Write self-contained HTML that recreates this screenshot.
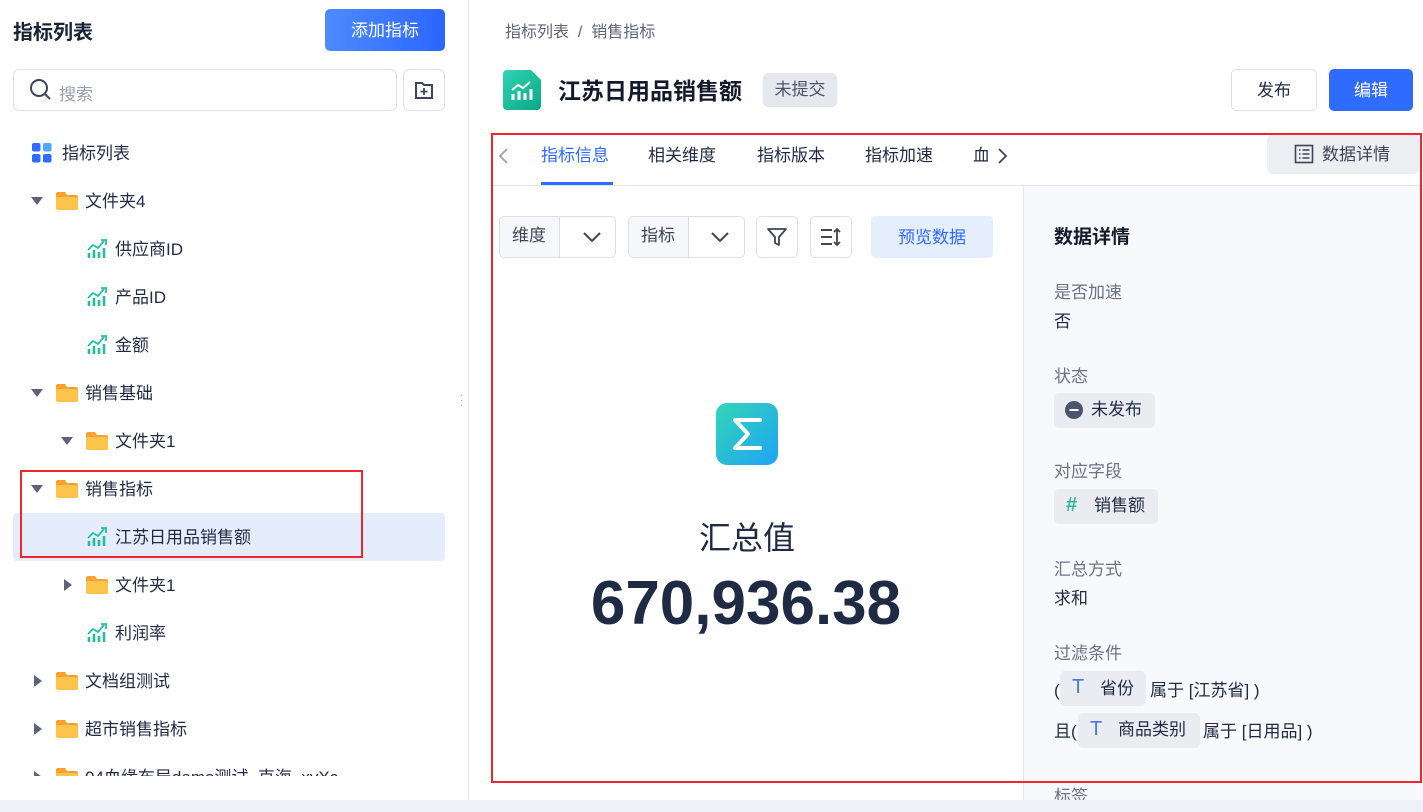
<!DOCTYPE html>
<html><head><meta charset="utf-8"><style>
*{margin:0;padding:0;box-sizing:border-box}
body{width:1423px;height:812px;position:relative;overflow:hidden;background:#fff;font-family:"Liberation Sans","Noto Sans CJK SC",sans-serif;color:#1f2a44}
.a{position:absolute}
.t{font-size:17px;line-height:20px;color:#1f2a44;white-space:nowrap}
.g{color:#6b7385;font-size:17px;white-space:nowrap}
.btn{border:1px solid #dcdfe6;border-radius:5px;background:#fff}
.tri{width:0;height:0;border-left:6px solid transparent;border-right:6px solid transparent;border-top:8px solid #5c6478}
.trr{width:0;height:0;border-top:6px solid transparent;border-bottom:6px solid transparent;border-left:8px solid #5c6478}
.chip{background:#eaecf1;border-radius:5px}
</style></head><body>
<div class="a" style="left:468px;top:0;width:1px;height:800px;background:#e4e7ed"></div>
<div class="a" style="left:13px;top:16px;font-size:20px;font-weight:bold;color:#1a2236">指标列表</div>
<div class="a" style="left:325px;top:9px;width:120px;height:42px;border-radius:5px;background:linear-gradient(90deg,#4d8bff,#2a66ff);color:#fff;font-size:17px;line-height:44px;text-align:center">添加指标</div>
<div class="a btn" style="left:13px;top:69px;width:384px;height:42px;border-radius:6px"></div>
<svg class="a" style="left:29px;top:78px" width="24" height="24" viewBox="0 0 24 24"><circle cx="10" cy="10" r="8" fill="none" stroke="#3d4557" stroke-width="2"/><path d="M16 16l5 5" stroke="#3d4557" stroke-width="2"/></svg>
<div class="a g" style="left:59px;top:80px;color:#9aa0ad">搜索</div>
<div class="a btn" style="left:403px;top:69px;width:42px;height:42px;border-radius:6px"></div>
<svg class="a" style="left:414px;top:80px" width="20" height="20" viewBox="0 0 20 20"><path d="M2 3h6l2 2h8v13H2z" fill="none" stroke="#3d4557" stroke-width="2"/><path d="M10 8v7M6.5 11.5h7" stroke="#3d4557" stroke-width="1.8"/></svg>
<svg class="a" style="left:32px;top:143px" width="20" height="20" viewBox="0 0 20 20"><rect x="0" y="0" width="8.5" height="8.5" rx="2" fill="#2f6bff"/><rect x="11" y="0" width="8.5" height="8.5" rx="2" fill="#4aa8ff"/><rect x="0" y="11" width="8.5" height="8.5" rx="2" fill="#2f6bff"/><rect x="11" y="11" width="8.5" height="8.5" rx="2" fill="#2f6bff"/></svg>
<div class="a t" style="left:62px;top:144px">指标列表</div>
<div class="a" style="left:13px;top:513px;width:432px;height:48px;background:#e5edfc;border-radius:4px"></div>
<div id="tree"></div>

<div class="a" style="left:505px;top:18px;font-size:16px;color:#5c6478">指标列表 &nbsp;/&nbsp; 销售指标</div>
<svg class="a" style="left:503px;top:70px" width="38" height="40" viewBox="0 0 38 40"><defs><linearGradient id="gr" x1="0" y1="0" x2="1" y2="1"><stop offset="0" stop-color="#2fd4b0"/><stop offset="1" stop-color="#0aa88a"/></linearGradient></defs><path d="M4 0h24l10 10v26a4 4 0 0 1-4 4H4a4 4 0 0 1-4-4V4a4 4 0 0 1 4-4z" fill="url(#gr)"/><path d="M10 30v-6M16 30v-9M22 30v-7M28 30v-11" stroke="#fff" stroke-width="3"/><path d="M9 20l6-5 5 3 7-6" fill="none" stroke="#fff" stroke-width="2"/></svg>
<div class="a" style="left:558px;top:72px;font-size:23px;font-weight:bold;color:#121a2c">江苏日用品销售额</div>
<div class="a chip" style="left:763px;top:73px;width:74px;height:34px;font-size:17px;line-height:34px;text-align:center;color:#4b5366;background:#e6e8ef">未提交</div>
<div class="a btn" style="left:1231px;top:69px;width:86px;height:42px;font-size:17px;line-height:42px;text-align:center;color:#1f2a44">发布</div>
<div class="a" style="left:1329px;top:69px;width:84px;height:42px;border-radius:5px;background:#2f6bff;color:#fff;font-size:17px;line-height:44px;text-align:center">编辑</div>

<div class="a" style="left:491px;top:185px;width:932px;height:1px;background:#e4e7ed"></div>
<svg class="a" style="left:497px;top:147px" width="12" height="18" viewBox="0 0 12 18"><path d="M10 2L3 9l7 7" fill="none" stroke="#9aa0ad" stroke-width="1.8"/></svg>
<div class="a t" style="left:541px;top:146px;color:#2f6bff">指标信息</div>
<div class="a" style="left:541px;top:182px;width:72px;height:3px;background:#2f6bff"></div>
<div class="a t" style="left:648px;top:146px">相关维度</div>
<div class="a t" style="left:757px;top:146px">指标版本</div>
<div class="a t" style="left:865px;top:146px">指标加速</div>
<div class="a t" style="left:973px;top:146px;width:15px;overflow:hidden">血</div>
<svg class="a" style="left:997px;top:147px" width="12" height="18" viewBox="0 0 12 18"><path d="M2 2l7 7-7 7" fill="none" stroke="#3d4557" stroke-width="1.8"/></svg>
<div class="a" style="left:1267px;top:134px;width:152px;height:40px;background:#eceef2;border-radius:6px"></div>
<svg class="a" style="left:1294px;top:144px" width="20" height="20" viewBox="0 0 20 20"><rect x="1.5" y="1.5" width="17" height="17" fill="none" stroke="#3d4557" stroke-width="1.6"/><path d="M5 6h1.5M5 10h1.5M5 14h1.5M8.5 6h7M8.5 10h7M8.5 14h7" stroke="#3d4557" stroke-width="1.6"/></svg>
<div class="a t" style="left:1322px;top:145px;color:#3d4557">数据详情</div>

<div class="a btn" style="left:499px;top:216px;width:117px;height:42px"></div>
<div class="a" style="left:500px;top:217px;width:60px;height:40px;background:#f5f7fb;border-right:1px solid #dcdfe6;border-radius:5px 0 0 5px"></div>
<div class="a t" style="left:512px;top:226px;color:#3d4557">维度</div>
<svg class="a" style="left:582px;top:230px" width="20" height="14" viewBox="0 0 20 14"><path d="M2 3l8 8 8-8" fill="none" stroke="#3d4557" stroke-width="2"/></svg>
<div class="a btn" style="left:628px;top:216px;width:117px;height:42px"></div>
<div class="a" style="left:629px;top:217px;width:60px;height:40px;background:#f5f7fb;border-right:1px solid #dcdfe6;border-radius:5px 0 0 5px"></div>
<div class="a t" style="left:641px;top:226px;color:#3d4557">指标</div>
<svg class="a" style="left:710px;top:230px" width="20" height="14" viewBox="0 0 20 14"><path d="M2 3l8 8 8-8" fill="none" stroke="#3d4557" stroke-width="2"/></svg>
<div class="a btn" style="left:756px;top:216px;width:42px;height:42px"></div>
<svg class="a" style="left:766px;top:226px" width="22" height="22" viewBox="0 0 22 22"><path d="M2 3h18l-7 8v8l-4-2v-6z" fill="none" stroke="#3d4557" stroke-width="1.8" stroke-linejoin="round"/></svg>
<div class="a btn" style="left:810px;top:216px;width:42px;height:42px"></div>
<svg class="a" style="left:820px;top:226px" width="22" height="22" viewBox="0 0 22 22"><path d="M1 4h11M1 11h11M1 18h11" stroke="#3d4557" stroke-width="2"/><path d="M17 3v16M14 6l3-3 3 3M14 16l3 3 3-3" fill="none" stroke="#3d4557" stroke-width="1.8"/></svg>
<div class="a" style="left:871px;top:216px;width:122px;height:42px;background:#e5eefd;border-radius:5px;color:#2f6bff;font-size:17px;line-height:44px;text-align:center">预览数据</div>

<svg class="a" style="left:716px;top:403px" width="62" height="62" viewBox="0 0 62 62"><defs><linearGradient id="sg" x1="0" y1="0" x2="1" y2="1"><stop offset="0" stop-color="#33d6b6"/><stop offset="1" stop-color="#1fa3f5"/></linearGradient></defs><rect width="62" height="62" rx="11" fill="url(#sg)"/><path d="M44 17H19l13 14-13 14h25" fill="none" stroke="#fff" stroke-width="4" stroke-linejoin="round" stroke-linecap="round"/></svg>
<div class="a" style="left:647px;top:513px;width:200px;text-align:center;font-size:32px;color:#1f2a44">汇总值</div>
<div class="a" style="left:546px;top:568px;width:400px;text-align:center;font-size:62px;font-weight:bold;color:#1f2a44">670,936.38</div>

<div class="a" style="left:1023px;top:186px;width:400px;height:614px;background:#f8f9fc;border-left:1px solid #e4e7ed"></div>
<div class="a" style="left:1054px;top:222px;font-size:19px;font-weight:bold;color:#121a2c">数据详情</div>
<div class="a g" style="left:1054px;top:278px">是否加速</div>
<div class="a t" style="left:1054px;top:312px">否</div>
<div class="a g" style="left:1054px;top:362px">状态</div>
<div class="a chip" style="left:1054px;top:393px;width:101px;height:35px"></div>
<svg class="a" style="left:1065px;top:401px" width="18" height="18" viewBox="0 0 18 18"><circle cx="9" cy="9" r="9" fill="#4b5570"/><path d="M4.5 9h9" stroke="#fff" stroke-width="2"/></svg>
<div class="a t" style="left:1091px;top:400px">未发布</div>
<div class="a g" style="left:1054px;top:457px">对应字段</div>
<div class="a chip" style="left:1054px;top:489px;width:104px;height:35px"></div>
<div class="a" style="left:1066px;top:494px;font-size:20px;color:#2fb89a;font-weight:bold">#</div>
<div class="a t" style="left:1094px;top:496px">销售额</div>
<div class="a g" style="left:1054px;top:555px">汇总方式</div>
<div class="a t" style="left:1054px;top:589px">求和</div>
<div class="a g" style="left:1054px;top:639px">过滤条件</div>
<div class="a t" style="left:1054px;top:681px">(</div>
<div class="a chip" style="left:1060px;top:671px;width:86px;height:35px"></div>
<div class="a" style="left:1072px;top:676px;font-size:20px;color:#4a78d8">T</div>
<div class="a t" style="left:1100px;top:679px">省份</div>
<div class="a t" style="left:1150px;top:681px">属于 [江苏省] )</div>
<div class="a t" style="left:1054px;top:722px">且(</div>
<div class="a chip" style="left:1078px;top:713px;width:122px;height:35px"></div>
<div class="a" style="left:1090px;top:718px;font-size:20px;color:#4a78d8">T</div>
<div class="a t" style="left:1118px;top:720px">商品类别</div>
<div class="a t" style="left:1203px;top:722px">属于 [日用品] )</div>
<div class="a g" style="left:1054px;top:782px">标签</div>
<div class="a" style="left:0;top:800px;width:1423px;height:12px;background:#eef1f8"></div>

<div class="a" style="left:491px;top:133px;width:931px;height:650px;border:2px solid #f0262b"></div>
<div class="a" style="left:20px;top:470px;width:343px;height:88px;border:2px solid #f0262b"></div>
<div class="a" style="left:460px;top:393px;color:#9aa0ad;font-size:10px;line-height:5px">·<br>·<br>·</div>

<script>
var rows=[[0,'f','文件夹4','d'],[1,'m','供应商ID'],[1,'m','产品ID'],[1,'m','金额'],[0,'f','销售基础','d'],[1,'f','文件夹1','d'],[0,'f','销售指标','d'],[1,'m','江苏日用品销售额'],[1,'f','文件夹1','r'],[1,'m','利润率'],[0,'f','文档组测试','r'],[0,'f','超市销售指标','r'],[0,'f','04血缘布局demo测试_克海_xyXc','r']];
var h='';
rows.forEach(function(r,i){var cy=201+i*48;var ix=r[0]?86:56;
if(r[3]=='d')h+='<div class="a tri" style="left:'+(ix-25)+'px;top:'+(cy-4)+'px"></div>';
if(r[3]=='r')h+='<div class="a trr" style="left:'+(ix-22)+'px;top:'+(cy-6)+'px"></div>';
if(r[1]=='f')h+='<svg class="a" style="left:'+ix+'px;top:'+(cy-10)+'px" width="22" height="20" viewBox="0 0 22 20"><path d="M2 1h7l2 3h9a2 2 0 0 1 2 2v11a2 2 0 0 1-2 2H2a2 2 0 0 1-2-2V3a2 2 0 0 1 2-2z" fill="#f7a233"/><rect x="0" y="6" width="22" height="13" rx="2" fill="#fcc44a"/></svg>';
else h+='<svg class="a" style="left:'+(ix+1)+'px;top:'+(cy-10)+'px" width="20" height="20" viewBox="0 0 20 20"><path d="M2 19v-5M7 19v-8M12 19v-6M17 19v-10" stroke="#21bfa0" stroke-width="2.6"/><path d="M1 11l5-5 5 3 6-7" fill="none" stroke="#21bfa0" stroke-width="1.8"/><path d="M14 1h5v5" fill="none" stroke="#21bfa0" stroke-width="1.8"/></svg>';
h+='<div class="a t" style="left:'+(ix+29)+'px;top:'+(cy-9)+'px">'+r[2]+'</div>';});
h+='<div class="a" style="left:0;top:776px;width:467px;height:24px;background:#fff"></div>';
document.getElementById('tree').innerHTML=h;
</script>
</body></html>
